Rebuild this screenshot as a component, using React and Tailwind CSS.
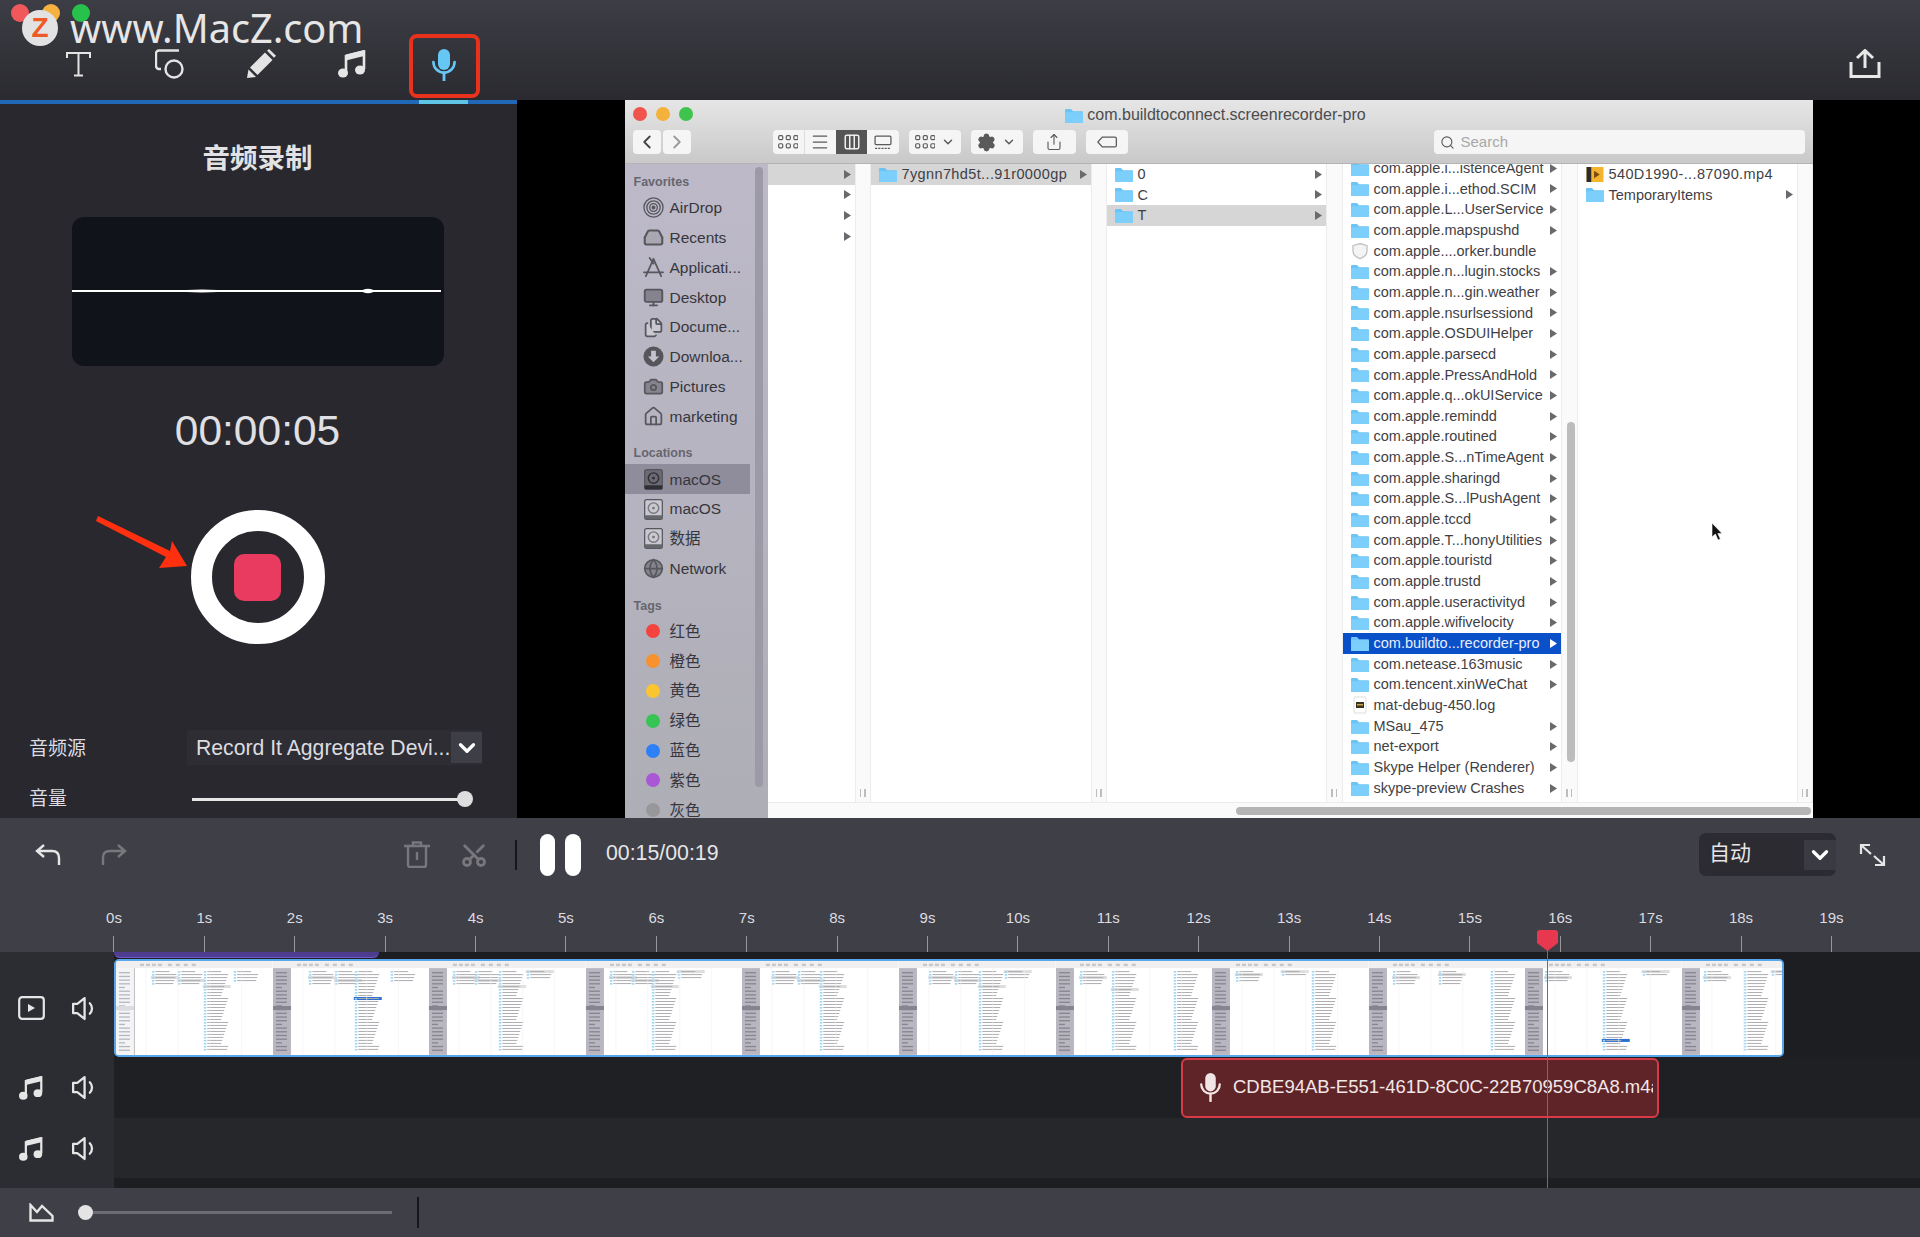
import React from 'react';
import {
  Camera,
  ChevronDown,
  ChevronLeft,
  ChevronRight,
  Columns3,
  Files,
  Globe,
  House,
  Inbox,
  Menu,
  Monitor,
  Scissors,
  Search,
  Settings,
  Share,
} from 'lucide-react';

const LIST = [
  'com.apple.i...istenceAgent',
  'com.apple.i...ethod.SCIM',
  'com.apple.L...UserService',
  'com.apple.mapspushd',
  'com.apple....orker.bundle',
  'com.apple.n...lugin.stocks',
  'com.apple.n...gin.weather',
  'com.apple.nsurlsessiond',
  'com.apple.OSDUIHelper',
  'com.apple.parsecd',
  'com.apple.PressAndHold',
  'com.apple.q...okUIService',
  'com.apple.remindd',
  'com.apple.routined',
  'com.apple.S...nTimeAgent',
  'com.apple.sharingd',
  'com.apple.S...lPushAgent',
  'com.apple.tccd',
  'com.apple.T...honyUtilities',
  'com.apple.touristd',
  'com.apple.trustd',
  'com.apple.useractivityd',
  'com.apple.wifivelocity',
  'com.buildto...recorder-pro',
  'com.netease.163music',
  'com.tencent.xinWeChat',
  'mat-debug-450.log',
  'MSau_475',
  'net-export',
  'Skype Helper (Renderer)',
  'skype-preview Crashes',
];

const TAGS = [
  ['红色', 'bg-[#f5443f]'],
  ['橙色', 'bg-[#f7922e]'],
  ['黄色', 'bg-[#fbc52f]'],
  ['绿色', 'bg-[#36c454]'],
  ['蓝色', 'bg-[#2e80f6]'],
  ['紫色', 'bg-[#a957d6]'],
  ['灰色', 'bg-[#98989c]'],
];

// tiny previews of the recording in the video track: [x, rows, selected row]
const FRAMES = [
  { first: true, cols: [[36, 5, 2], [62, 5, 3], [88, 27, 5], [118, 4, -1]] },
  { cols: [[36, 5, 2], [62, 5, 3], [82, 27, 9], [118, 4, -1]] },
  { cols: [[24, 5, 2], [46, 5, 3], [70, 27, 5], [98, 3, 0]] },
  { cols: [[24, 5, 2], [46, 5, 3], [66, 27, 5], [92, 3, 0]] },
  { cols: [[30, 5, 2], [56, 5, 3], [78, 27, 5]] },
  { cols: [[30, 5, 2], [56, 5, 3], [80, 27, 5], [106, 3, 0]] },
  { cols: [[24, 5, 2], [56, 27, 6], [118, 27, -1]] },
  { cols: [[24, 4, 1], [70, 2, 0], [100, 27, -1]] },
  { cols: [[24, 5, 2], [70, 5, 1], [122, 27, -1]] },
  { cols: [[20, 4, 2], [78, 27, 23], [118, 2, 0]] },
  { cols: [[22, 4, 2], [62, 27, -1], [90, 2, 0]] },
];

function Folder({ className = 'w-[18px] h-[15px]' }) {
  return (
    <svg viewBox="0 0 18 14" preserveAspectRatio="none" className={`shrink-0 ${className}`}>
      <path d="M0 2a1 1 0 0 1 1-1h5l2 2h9a1 1 0 0 1 1 1v9a1 1 0 0 1-1 1H1a1 1 0 0 1-1-1z" fill="#6cc4f6" />
      <rect y="4" width="18" height="10" rx="1" fill="#7ccffa" />
    </svg>
  );
}

function Tri({ light }) {
  return (
    <svg viewBox="0 0 7 9" className="w-[7px] h-[9px] shrink-0">
      <path d="M0 0l7 4.5L0 9z" fill={light ? '#ffffff' : '#6a6a6e'} />
    </svg>
  );
}

function Row({ icon, text, arrow = true, active, selected, wide, pad = 'pl-[8px] pr-[4px]' }) {
  const bg = selected ? 'bg-[#0a50c8] text-[#e8eefc]' : active ? 'bg-[#d6d6d6]' : '';
  return (
    <div className={`h-[20.67px] shrink-0 flex items-center gap-[5px] text-[14.5px] whitespace-nowrap ${pad} ${bg}`}>
      {icon}
      <span className={`flex-1 pt-[1px] ${wide ? 'tracking-[0.38px]' : ''}`}>{text}</span>
      {arrow && <Tri light={selected} />}
    </div>
  );
}

function ColGap({ width = 'w-[16px]', children }) {
  return (
    <div className={`relative h-full shrink-0 bg-[#fafafa] border-x border-[#ececec] flex justify-center items-end pb-[5px] gap-[3px] ${width}`}>
      <div className="w-[1.5px] h-[8px] bg-[#bdbdbd]" />
      <div className="w-[1.5px] h-[8px] bg-[#bdbdbd]" />
      {children}
    </div>
  );
}

function AirDropIcon() {
  return (
    <svg viewBox="0 0 22 22" className="w-[21px] h-[21px]" fill="none" stroke="#57575e" strokeWidth="1.4">
      <circle cx="11" cy="11" r="10" />
      <circle cx="11" cy="11" r="7" />
      <circle cx="11" cy="11" r="4" />
      <circle cx="11" cy="11" r="1.4" fill="#57575e" />
    </svg>
  );
}

function AppsIcon() {
  return (
    <svg viewBox="0 0 22 22" className="w-[21px] h-[21px]" fill="none" stroke="#57575e" strokeWidth="1.8" strokeLinecap="round">
      <path d="M11 2L3 20M11 2l8 18M1 16h20M7 1l4 6" />
    </svg>
  );
}

function DownloadIcon() {
  return (
    <svg viewBox="0 0 22 22" className="w-[21px] h-[21px]">
      <circle cx="11" cy="11" r="10.5" fill="#55555c" />
      <path d="M8.5 5h5v6h3.5L11 17 5 11h3.5z" fill="#c4c2cc" />
    </svg>
  );
}

function DiskIcon({ dark }) {
  return (
    <svg viewBox="0 0 20 22" className="w-[19px] h-[21px]">
      <rect x="0.7" y="0.7" width="18.6" height="20.6" rx="2" fill={dark ? '#6a6974' : '#c9c8d0'} stroke="#55555c" strokeWidth="1.3" />
      <circle cx="10" cy="9.5" r="5.5" fill="none" stroke={dark ? '#2f2f35' : '#77777e'} strokeWidth="1.5" />
      <circle cx="10" cy="9.5" r="1.5" fill={dark ? '#2f2f35' : '#77777e'} />
      <rect x="0.7" y="17" width="18.6" height="4.3" rx="1" fill={dark ? '#2f2f35' : '#66666d'} />
    </svg>
  );
}

const iconCls = 'w-[21px] h-[21px] text-[#57575e]';

function Side({ icon, text, active }) {
  return (
    <div className={`h-[29.8px] shrink-0 flex items-center w-[125px] ${active ? 'bg-[#8f8d9c]' : ''}`}>
      <div className="ml-[18px] w-[21px] flex justify-center">{icon}</div>
      <span className="ml-[6px] text-[15.5px] text-[#36363c] whitespace-nowrap">{text}</span>
    </div>
  );
}

function SideLabel({ text, className }) {
  return <div className={`h-[22px] flex items-center pl-[9px] text-[12.5px] font-semibold text-[#66666e] ${className}`}>{text}</div>;
}

function ToolBtn({ className, children }) {
  return <div className={`h-[24px] shrink-0 bg-[#f5f5f5] rounded-[4px] flex items-center justify-center text-[#5a5a5a] ${className}`}>{children}</div>;
}

function GridGlyph() {
  return (
    <svg viewBox="0 0 17 12" className="w-[20px] h-[14px]" fill="none" stroke="#5a5a5a" strokeWidth="1">
      {[0, 6.5, 13].map((x) =>
        [0.5, 7.5].map((y) => <rect key={`${x}${y}`} x={x + 0.5} y={y} width="3.5" height="3.5" rx="1" />),
      )}
    </svg>
  );
}

function Finder() {
  return (
    <div className="relative w-[1188px] h-full flex flex-col overflow-hidden">
      <div className="h-[64px] shrink-0 flex flex-col bg-gradient-to-b from-[#e6e6e6] to-[#c9c9c9] border-b border-[#b4b4b4]">
        <div className="h-[30px] shrink-0 relative flex items-center justify-center gap-[4px] pr-[6px]">
          <div className="absolute left-[8px] top-[7px] flex gap-[9px]">
            <div className="w-[14px] h-[14px] rounded-full bg-[#f0544c]" />
            <div className="w-[14px] h-[14px] rounded-full bg-[#f4b13c]" />
            <div className="w-[14px] h-[14px] rounded-full bg-[#3ec44c]" />
          </div>
          <Folder />
          <span className="text-[16px] text-[#4c4c4c]">com.buildtoconnect.screenrecorder-pro</span>
        </div>
        <div className="flex pl-[8px] pr-[8px]">
          <ToolBtn className="w-[28px]">
            <ChevronLeft size={22} className="text-[#444]" />
          </ToolBtn>
          <ToolBtn className="w-[28px] ml-[2px]">
            <ChevronRight size={22} className="text-[#999]" />
          </ToolBtn>
          <div className="ml-[82px] w-[126px] h-[24px] shrink-0 flex rounded-[4px] overflow-hidden bg-[#f5f5f5]">
            <div className="flex-1 flex items-center justify-center border-r border-[#ddd]">
              <GridGlyph />
            </div>
            <div className="flex-1 flex items-center justify-center text-[#5a5a5a]">
              <Menu size={20} strokeWidth={1.5} />
            </div>
            <div className="flex-1 flex items-center justify-center bg-[#555555] text-[#eeeeee]">
              <Columns3 size={18} strokeWidth={2} />
            </div>
            <div className="flex-1 flex items-center justify-center">
              <svg viewBox="0 0 17 14" className="w-[18px] h-[15px]" fill="none" stroke="#5a5a5a" strokeWidth="1.2">
                <rect x="1" y="1" width="15" height="8" rx="1" />
                <path d="M1 12.5h15" strokeDasharray="2 1" />
              </svg>
            </div>
          </div>
          <ToolBtn className="w-[52px] ml-[10px] gap-[6px]">
            <GridGlyph />
            <ChevronDown size={14} strokeWidth={2.5} />
          </ToolBtn>
          <ToolBtn className="w-[52px] ml-[10px] gap-[6px]">
            <Settings size={19} strokeWidth={2.5} className="fill-[#5a5a5a]" />
            <ChevronDown size={14} strokeWidth={2.5} />
          </ToolBtn>
          <ToolBtn className="w-[43px] ml-[10px]">
            <Share size={18} strokeWidth={1.5} />
          </ToolBtn>
          <ToolBtn className="w-[42px] ml-[10px]">
            <svg viewBox="0 0 19 11" className="w-[20px] h-[12px]" fill="none" stroke="#5a5a5a" strokeWidth="1.2">
              <path d="M5 .8h12a1.4 1.4 0 0 1 1.4 1.4v6.6a1.4 1.4 0 0 1-1.4 1.4H5L.8 5.5z" />
            </svg>
          </ToolBtn>
          <ToolBtn className="ml-auto w-[371px] justify-start pl-[6px] gap-[6px]">
            <Search size={15} strokeWidth={1.8} />
            <span className="text-[15px] text-[#a8a8a8]">Search</span>
          </ToolBtn>
        </div>
      </div>

      <div className="flex-1 min-h-0 flex">
        <div className="relative w-[143px] shrink-0 h-full overflow-hidden bg-gradient-to-b from-[#bdb9c9] to-[#aeaeb6] pt-[7px]">
          <div className="absolute left-[130px] top-[3px] w-[8px] h-[620px] rounded-full bg-[#9c9aa6]" />
          <SideLabel text="Favorites" />
          <Side icon={<AirDropIcon />} text="AirDrop" />
          <Side icon={<Inbox className={`${iconCls} fill-[#a9a8b2]`} strokeWidth={2.4} />} text="Recents" />
          <Side icon={<AppsIcon />} text="Applicati..." />
          <Side icon={<Monitor className={`${iconCls} fill-[#85848e]`} strokeWidth={2.2} />} text="Desktop" />
          <Side icon={<Files className={`${iconCls} fill-[#c9c8d0]`} />} text="Docume..." />
          <Side icon={<DownloadIcon />} text="Downloa..." />
          <Side icon={<Camera className={`${iconCls} fill-[#85848e]`} />} text="Pictures" />
          <Side icon={<House className={iconCls} />} text="marketing" />
          <SideLabel text="Locations" className="mt-[11px]" />
          <Side active icon={<DiskIcon dark />} text="macOS" />
          <Side icon={<DiskIcon />} text="macOS" />
          <Side icon={<DiskIcon />} text="数据" />
          <Side icon={<Globe className={`${iconCls} fill-[#85848e]`} />} text="Network" />
          <SideLabel text="Tags" className="mt-[12px] -mb-[1px]" />
          {TAGS.map(([name, color]) => (
            <Side key={name} text={name} icon={<div className={`w-[14px] h-[14px] rounded-full ${color}`} />} />
          ))}
        </div>

        <div className="flex-1 min-w-0 flex flex-col bg-white text-[#3f3f45]">
          <div className="flex-1 min-h-0 flex">
            <div className="w-[87px] shrink-0 flex flex-col">
              <Row active text="" pad="pl-0 pr-[4px]" />
              <Row text="" pad="pl-0 pr-[4px]" />
              <Row text="" pad="pl-0 pr-[4px]" />
              <Row text="" pad="pl-0 pr-[4px]" />
            </div>
            <ColGap />
            <div className="w-[220px] shrink-0 flex flex-col">
              <Row active wide icon={<Folder />} text="7ygnn7hd5t...91r0000gp" />
            </div>
            <ColGap />
            <div className="w-[219px] shrink-0 flex flex-col">
              <Row icon={<Folder />} text="0" />
              <Row icon={<Folder />} text="C" />
              <Row active icon={<Folder />} text="T" />
            </div>
            <ColGap width="w-[17px]" />
            <div className="w-[218px] shrink-0 flex flex-col overflow-hidden">
              <div className="-mt-[6px] flex flex-col">
                {LIST.map((name) => {
                  let icon = <Folder />;
                  if (name.endsWith('.bundle')) {
                    icon = (
                      <svg viewBox="0 0 18 18" className="w-[18px] h-[18px] shrink-0" fill="#f4f4f4" stroke="#c4c4c4" strokeWidth="1.4">
                        <path d="M9 1.5l7 2.2v5c0 4-3 6.6-7 8-4-1.4-7-4-7-8v-5z" />
                      </svg>
                    );
                  }
                  if (name.endsWith('.log')) {
                    icon = (
                      <svg viewBox="0 0 18 18" className="w-[18px] h-[18px] shrink-0">
                        <rect x="3" y="1" width="12" height="16" rx="1" fill="#ffffff" stroke="#dddddd" />
                        <rect x="5" y="6" width="8" height="6" fill="#3b3320" />
                        <rect x="6" y="8" width="6" height="1.5" fill="#c9a14a" />
                      </svg>
                    );
                  }
                  return (
                    <Row
                      key={name}
                      icon={icon}
                      text={name}
                      arrow={!name.endsWith('.bundle') && !name.endsWith('.log')}
                      selected={name.startsWith('com.buildto')}
                    />
                  );
                })}
              </div>
            </div>
            <ColGap width="w-[17px]">
              <div className="absolute left-[5px] top-[258px] w-[8px] h-[340px] rounded-full bg-[#bcbcbc]" />
            </ColGap>
            <div className="w-[219px] shrink-0 flex flex-col">
              <Row
                wide
                arrow={false}
                text="540D1990-...87090.mp4"
                icon={
                  <svg viewBox="0 0 18 16" className="w-[18px] h-[15px] shrink-0">
                    <rect width="18" height="16" fill="#f5b32e" />
                    <rect x="0" width="5" height="16" fill="#2c2c2c" />
                    <path d="M8 4l6 4-6 4z" fill="#7a4a10" />
                  </svg>
                }
              />
              <Row icon={<Folder />} text="TemporaryItems" />
            </div>
            <ColGap width="flex-1" />
          </div>
          <div className="h-[16px] shrink-0 border-t border-[#ececec] bg-[#fafafa] pt-[4px] flex justify-end pr-[2px]">
            <div className="w-[575px] h-[8px] rounded-full bg-[#b5b5b5]" />
          </div>
        </div>
      </div>

      <svg viewBox="0 0 12 18" className="absolute left-[1086px] top-[423px] w-[12px] h-[18px]">
        <path d="M1 0v14l3.4-3 2.6 6 2.4-1-2.6-5.6H11z" fill="#111111" stroke="#ffffff" strokeWidth="0.6" />
      </svg>
    </div>
  );
}

function RecordPanel() {
  return (
    <div className="w-[517px] shrink-0 h-full bg-[#28282e] flex flex-col items-center pr-[2px] overflow-hidden">
      <div className="w-[517px] self-start h-[4px] shrink-0 bg-[#2069b8]">
        <div className="ml-[419px] w-[49px] h-full bg-[#5ec5e6]" />
      </div>
      <div className="mt-[37px] h-[36px] shrink-0 flex items-center text-[27.5px] font-bold text-[#e2e2e4]">音频录制</div>
      <div className="mt-[40px] w-[372px] h-[149px] shrink-0 rounded-[12px] bg-[#11131a] overflow-hidden">
        <svg viewBox="0 0 372 149" className="w-full h-full">
          <rect x="0" y="73" width="369" height="2" fill="#ffffff" />
          <ellipse cx="296" cy="74" rx="6" ry="2.2" fill="#ffffff" />
          <ellipse cx="130" cy="74" rx="22" ry="1.4" fill="#ffffff" />
        </svg>
      </div>
      <div className="mt-[41px] h-[48px] shrink-0 flex items-center text-[42.5px] text-[#e0e0e4]">00:00:05</div>
      <div className="relative mt-[55px] w-[134px] h-[134px] shrink-0 rounded-full border-[21px] border-white flex items-center justify-center">
        <div className="w-[47px] h-[47px] rounded-[10px] bg-[#e93a5f]" />
        <svg viewBox="0 0 95 56" className="absolute left-[-116px] top-[-16px] w-[95px] h-[56px]">
          <path d="M2 1L74 36l2-10 15 25-28 2 7-11L0 6z" fill="#ff3010" />
        </svg>
      </div>
      <div className="mt-[86px] w-full h-[35px] shrink-0 flex items-center pl-[29px] text-[#dcdce0]">
        <div className="w-[158px] text-[19px] pt-[3px]">音频源</div>
        <div className="w-[295px] h-[35px] bg-[#2d2d33] flex items-center pl-[9px] pr-0 text-[21.2px] whitespace-nowrap">
          <span className="w-[255px]">Record It Aggregate Devi...</span>
          <div className="w-[31px] h-[31px] shrink-0 bg-[#3e3e46] flex items-center justify-center">
            <ChevronDown size={26} strokeWidth={3} className="text-white" />
          </div>
        </div>
      </div>
      <div className="mt-[16px] w-full h-[36px] shrink-0 flex items-center pl-[29px] text-[#dcdce0]">
        <div className="w-[163px] text-[19px]">音量</div>
        <div className="w-[280px] flex items-center">
          <div className="flex-1 h-[3px] bg-[#e6e6e6]" />
          <div className="w-[16px] h-[16px] -ml-[8px] mr-[-1px] rounded-full bg-[#dedee0]" />
        </div>
      </div>
    </div>
  );
}

function Speaker({ className }) {
  return (
    <svg viewBox="0 0 22 24" className={className} fill="none" stroke="#e6e6e6" strokeWidth="2.2" strokeLinejoin="round" strokeLinecap="round">
      <path d="M13 2L6 7.5H2v9h4l7 5.5z" />
      <path d="M18 7a7 7 0 0 1 0 10" />
    </svg>
  );
}

function Note({ className, color = '#e6e6e6' }) {
  return (
    <svg viewBox="0 0 28 28" className={className}>
      <path d="M8 22V6L26 1.5V19" fill="none" stroke={color} strokeWidth="2.6" />
      <path d="M8 4.5L26 0v6L8 10.5z" fill={color} />
      <ellipse cx="5" cy="23" rx="5" ry="4.6" fill={color} />
      <ellipse cx="22" cy="20" rx="5" ry="4.6" fill={color} />
    </svg>
  );
}

function Mic({ className, color }) {
  return (
    <svg viewBox="0 0 24 32" className={className}>
      <rect x="6" y="0" width="12" height="21" rx="6" fill={color} />
      <path d="M1.4 13a10.6 10.6 0 0 0 21.2 0" fill="none" stroke={color} strokeWidth="2.6" strokeLinecap="round" />
      <path d="M12 24v8" stroke={color} strokeWidth="2.8" strokeLinecap="round" />
    </svg>
  );
}

function Thumb({ first, cols }) {
  return (
    <svg viewBox="0 0 157 94" className="w-[156.6px] h-[94px] shrink-0 blur-[0.4px]">
      <rect width="157" height="94" fill="#ffffff" />
      <rect width="157" height="7" fill="#f0f0f0" />
      {[24, 30, 36, 42, 52, 60, 68, 76].map((x) => (
        <rect key={x} x={x} y="2.5" width="4" height="2.5" fill="#c8c8c8" />
      ))}
      <rect x="0" y="7" width="18" height="87" fill={first ? '#f4f4f6' : '#b8b7c1'} />
      {first && <rect x="18" y="7" width="1" height="87" fill="#c0c0c0" />}
      {Array.from({ length: 22 }, (_, i) => (
        <rect key={i} x="3" y={11 + i * 3.7} width={i % 5 === 4 ? 6 : 11} height="1.3" fill={first ? '#b4b8be' : '#85858e'} />
      ))}
      <rect x="0" y="45" width="18" height="4" fill={first ? '#dcdce0' : '#858491'} />
      {cols.map(([x, rows, sel]) =>
        Array.from({ length: rows }, (_, i) => (
          <g key={`${x}-${i}`}>
            {i === sel && <rect x={x - 1} y={9 + i * 3} width="28" height="3" fill={rows > 20 && sel > 6 ? '#2a6fd0' : '#dddddd'} />}
            <rect x={x} y={10 + i * 3} width="2.5" height="1.6" fill="#9cd6f6" />
            <rect x={x + 3.5} y={10 + i * 3} width={14 + ((i * 7) % 8)} height="1" fill="#adadb2" />
          </g>
        )),
      )}
      <path d="M30 7v87M62 7v87M94 7v87M126 7v87" stroke="#f0f0f0" strokeWidth="0.6" />
    </svg>
  );
}

const playingAt = Array.from({ length: 20 }, (_, i) => `${i}s`);

export default function App() {
  return (
    <div className="relative w-[1920px] h-[1237px] flex flex-col overflow-hidden bg-black font-['Liberation_Sans','Noto_Sans_CJK_SC',sans-serif]">
      <header className="h-[100px] shrink-0 relative bg-gradient-to-b from-[#3d3d45] to-[#2a2a30] flex items-start pl-[32px]">
        <div className="absolute left-[11px] top-[4px] w-[18px] h-[18px] rounded-full bg-[#f0585c]" />
        <div className="absolute left-[42px] top-[4px] w-[18px] h-[18px] rounded-full bg-[#f5b240]" />
        <div className="absolute left-[72px] top-[4px] w-[18px] h-[18px] rounded-full bg-[#27c24c]" />
        <div className="absolute left-[22px] top-[10px] w-[36px] h-[36px] rounded-full bg-[#e2e2e2] flex items-center justify-center text-[28px] font-bold text-[#ee5a26]">Z</div>
        <div className="absolute left-[70px] top-[-2px] text-[39.7px] leading-[60px] text-[#e6e6e6] font-['Noto_Sans',sans-serif]">www.MacZ.com</div>

        <div className="w-[92px] h-[64px] mt-[34px] pb-[5px] flex items-center justify-center">
          <svg viewBox="0 0 25 26" className="w-[25px] h-[26px]" fill="none" stroke="#e4e4e4" strokeWidth="2">
            <path d="M1 7V2h23v5M12.5 2v22M8 24.5h9" />
          </svg>
        </div>
        <div className="w-[92px] h-[64px] mt-[34px] pb-[4px] flex items-center justify-center">
          <svg viewBox="0 0 30 30" className="w-[30px] h-[30px]" fill="none" stroke="#e4e4e4" strokeWidth="2.4">
            <path d="M24 1.5H4a3 3 0 0 0-3 3V17a3 3 0 0 0 3 3h2" />
            <circle cx="19" cy="20" r="8.5" />
          </svg>
        </div>
        <div className="w-[92px] h-[64px] mt-[34px] pb-[6px] flex items-center justify-center">
          <svg viewBox="0 0 30 29" className="w-[30px] h-[29px]" fill="#e4e4e4">
            <path d="M3 18.5L18 3.5l7.5 7.5-15 15z" />
            <path d="M1.5 20.5l7.5 7.5L0 29z" />
            <path d="M20 1.8L22 0l7 6.8-2 2z" />
          </svg>
        </div>
        <div className="w-[92px] h-[64px] mt-[34px] -ml-[2px] pb-[4px] flex items-center justify-center">
          <Note className="w-[28px] h-[28px]" />
        </div>
        <div className="w-[92px] h-[64px] mt-[34px] flex items-center justify-center">
          <div className="w-[71px] h-[64px] pb-[2px] border-[4px] border-[#e8321c] rounded-[8px] flex items-center justify-center">
            <Mic className="w-[24px] h-[32px]" color="#66c7f4" />
          </div>
        </div>
        <div className="ml-auto mr-[39px] mt-[49px]">
          <svg viewBox="0 0 32 29" className="w-[32px] h-[29px]" fill="none" stroke="#e8e8e8" strokeWidth="3">
            <path d="M16 1.5V19M8 9l8-7.5L24 9" />
            <path d="M2 13v14.5h28V13" />
          </svg>
        </div>
      </header>

      <div className="h-[718px] shrink-0 flex">
        <RecordPanel />
        <div className="flex-1 h-full bg-black flex justify-center">
          <Finder />
        </div>
      </div>

      <div className="h-[134px] shrink-0 bg-[#3f3f47] flex flex-col">
        <div className="mt-[14px] h-[45px] shrink-0 flex items-center">
          <svg viewBox="0 0 26 21" className="ml-[35px] w-[26px] h-[21px]" fill="none" stroke="#e6e6e6" strokeWidth="2.4">
            <path d="M9 1L2 7l7 6M2 7h15q7 0 7 7v7" />
          </svg>
          <svg viewBox="0 0 26 21" className="ml-[40px] w-[26px] h-[21px]" fill="none" stroke="#77777c" strokeWidth="2.4">
            <path d="M17 1l7 6-7 6M24 7H9q-7 0-7 7v7" />
          </svg>
          <svg viewBox="0 0 26 27" className="ml-[276px] w-[28px] h-[27px]" fill="none" stroke="#77777c" strokeWidth="2.4">
            <path d="M0 5h26M9 5V1.5h8V5M4 5v19a2 2 0 0 0 2 2h14a2 2 0 0 0 2-2V5M13 11v8" />
          </svg>
          <Scissors className="ml-[29px] w-[28px] h-[28px] text-[#77777c] -rotate-90" strokeWidth={2.4} />
          <div className="ml-[27px] w-[2px] h-[30px] bg-[#17171a]" />
          <div className="ml-[23px] w-[15px] h-[42px] rounded-full bg-white" />
          <div className="ml-[10px] w-[16px] h-[42px] rounded-full bg-white" />
          <div className="ml-[25px] pb-[2px] text-[21.3px] text-[#e6e6e8]">00:15/00:19</div>
          <div className="ml-auto w-[137px] h-[43px] rounded-[7px] bg-[#2b2b31] flex items-center pl-[10px] text-[21px] text-[#e6e6e8]">
            <span className="flex-1 pb-[3px]">自动</span>
            <div className="w-[32px] h-[30px] bg-[#3a3a42] flex items-center justify-center">
              <ChevronDown size={26} strokeWidth={3} className="text-white" />
            </div>
          </div>
          <svg viewBox="0 0 27 24" className="ml-[23px] mr-[34px] w-[27px] h-[24px]" fill="none" stroke="#e6e6e6" strokeWidth="2.2">
            <path d="M2 11V2h9M2 2l10 9M25 13v9h-9M25 22l-10-9" />
          </svg>
        </div>
        <div className="mt-[32px] h-[18px] shrink-0 flex pl-[68.8px]">
          {playingAt.map((t) => (
            <div key={t} className="w-[90.4px] shrink-0 flex justify-center text-[15px] leading-[18px] text-[#dcdce0]">{t}</div>
          ))}
        </div>
        <div className="mt-[9px] h-[16px] shrink-0 flex pl-[68.8px]">
          {playingAt.map((t) => (
            <div key={t} className="w-[90.4px] shrink-0 flex justify-center">
              <div className="w-px h-full bg-[#97979c]" />
            </div>
          ))}
        </div>
      </div>

      <div className="h-[236px] shrink-0 flex">
        <div className="w-[114px] shrink-0 bg-[#2c2c33] flex flex-col pt-[7px]">
          <div className="h-[98px] flex items-center pl-[18px]">
            <svg viewBox="0 0 27 24" className="w-[27px] h-[24px]" fill="none" stroke="#e6e6e6" strokeWidth="2.2">
              <rect x="1.2" y="1.2" width="24.6" height="21.6" rx="3" />
              <path d="M10 8l7 4-7 4z" fill="#e6e6e6" stroke="none" />
            </svg>
            <Speaker className="ml-[25px] w-[25px] h-[25px]" />
          </div>
          <div className="h-[61px] flex items-center pl-[19px]">
            <Note className="w-[24px] h-[24px]" />
            <Speaker className="ml-[27px] w-[25px] h-[25px]" />
          </div>
          <div className="h-[61px] flex items-center pl-[19px]">
            <Note className="w-[24px] h-[24px]" />
            <Speaker className="ml-[27px] w-[25px] h-[25px]" />
          </div>
        </div>
        <div className="flex-1 flex flex-col bg-[#1d1e22]">
          <div className="h-[6px] w-[265px] shrink-0 rounded-b-[6px] bg-[#4d3c90] border-b border-[#6d5cc8]" />
          <div className="h-[1px] shrink-0" />
          <div className="h-[98px] shrink-0">
            <div className="w-[1670px] h-full rounded-[5px] border-2 border-[#5aa6ea] flex overflow-hidden bg-white">
              {FRAMES.map((f, i) => (
                <Thumb key={i} first={f.first} cols={f.cols} />
              ))}
            </div>
          </div>
          <div className="h-[61px] shrink-0 bg-[#1f2024]">
            <div className="ml-[1067px] w-[478px] h-[60px] mt-[1px] rounded-[6px] border-2 border-[#d83a48] bg-[#5f2428] flex items-center overflow-hidden">
              <Mic className="ml-[17px] mb-[2px] w-[21px] h-[30px] shrink-0" color="#f0e4e4" />
              <span className="ml-[12px] pb-[3px] w-[420px] shrink-0 overflow-hidden text-[18.5px] whitespace-nowrap text-[#f2e6e6]">CDBE94AB-E551-461D-8C0C-22B70959C8A8.m4a</span>
            </div>
          </div>
          <div className="h-[60px] shrink-0 bg-[#26272b]" />
        </div>
      </div>

      <div className="h-[49px] shrink-0 bg-[#3f3f47] flex items-center">
        <svg viewBox="0 0 25 19" className="ml-[29px] w-[25px] h-[19px]" fill="none" stroke="#e6e6e6" strokeWidth="2.4">
          <path d="M1.5 17.5V2L8 9l5-6 10.5 10v4.5z" />
        </svg>
        <div className="ml-[24px] w-[314px] flex items-center">
          <div className="w-[15px] h-[15px] rounded-full bg-[#e4e4e4]" />
          <div className="flex-1 h-[3px] bg-[#6c6c72]" />
        </div>
        <div className="ml-[25px] w-[2px] h-[31px] bg-[#17171a]" />
      </div>

      <svg viewBox="0 0 21 21" className="absolute left-[1537px] top-[930px] w-[21px] h-[21px]">
        <path d="M3 0h15a3 3 0 0 1 3 3v10l-10.5 8L0 13V3a3 3 0 0 1 3-3z" fill="#e8384f" />
      </svg>
      <div className="absolute left-[1547px] top-[948px] w-px h-[240px] bg-[#e8384f]" />
    </div>
  );
}
